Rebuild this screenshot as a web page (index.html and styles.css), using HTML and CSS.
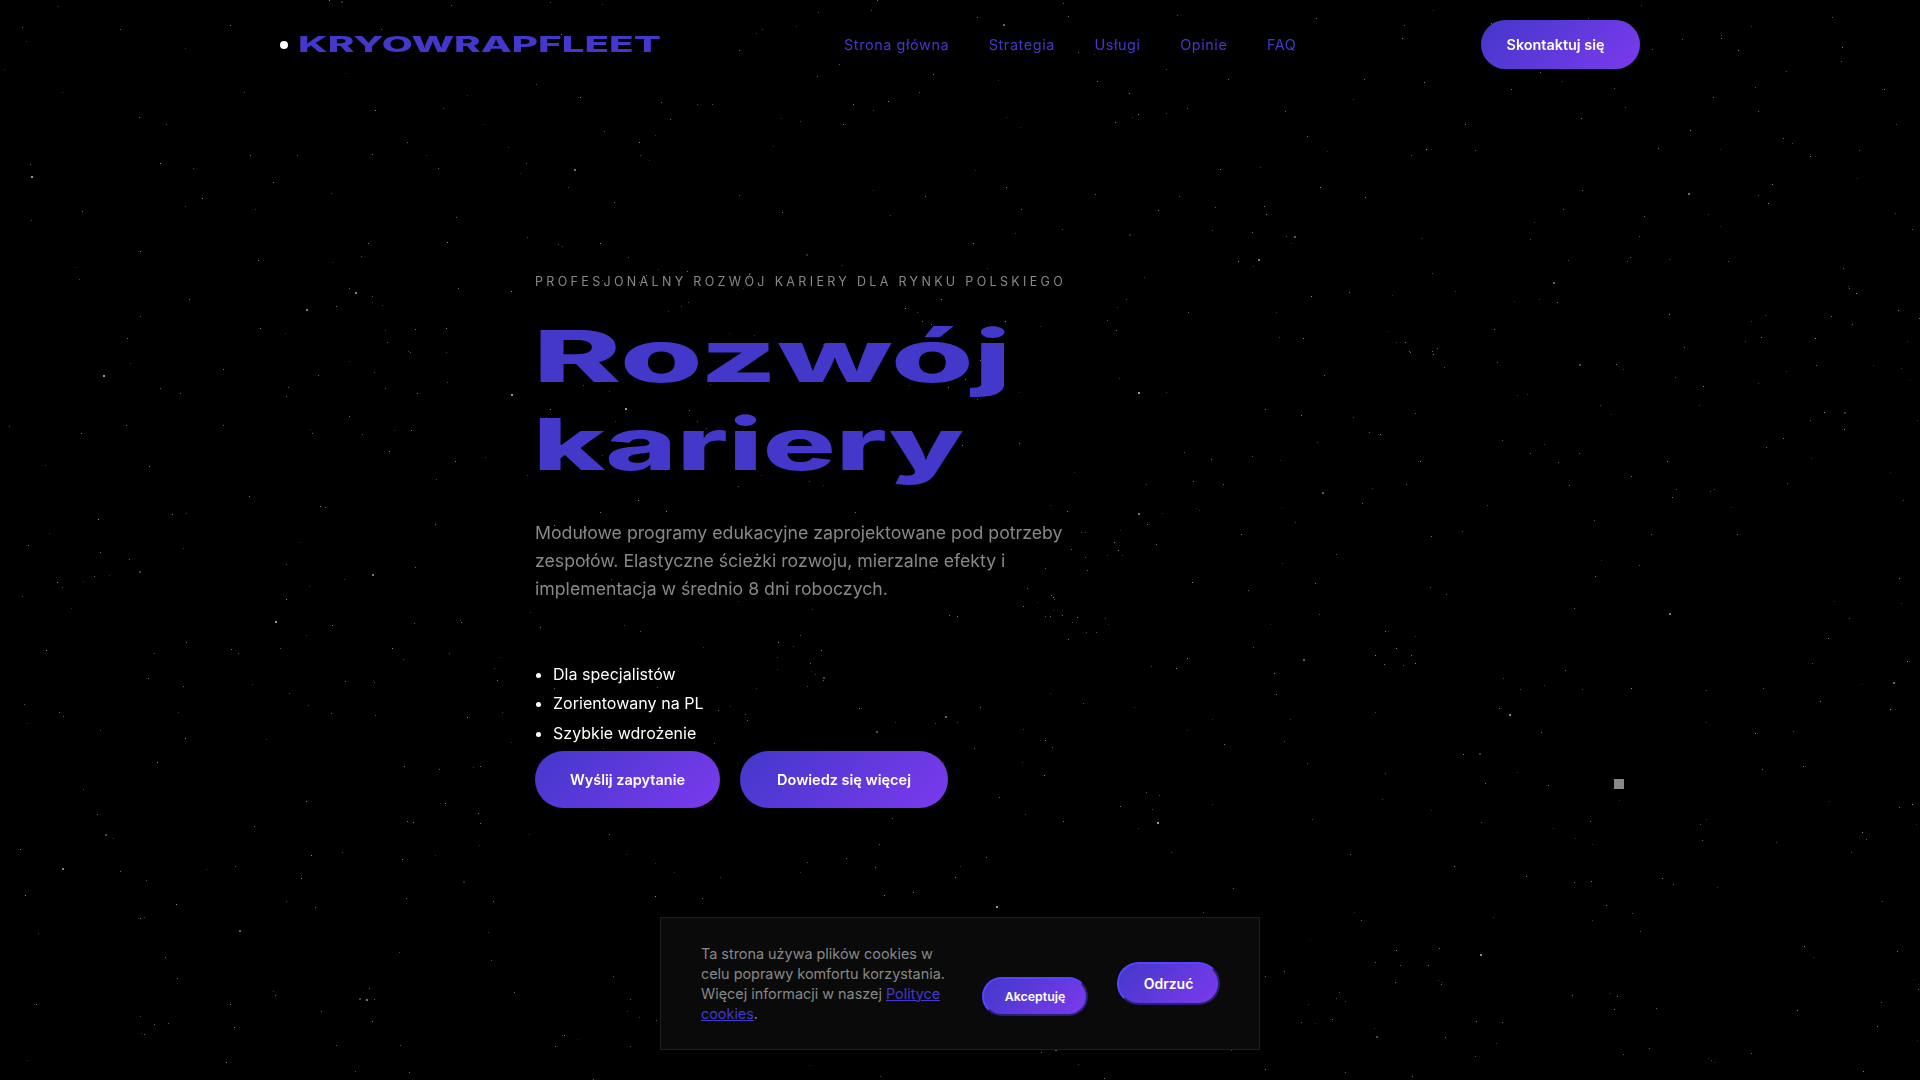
FILE: index.html
```html
<!DOCTYPE html>
<html lang="pl">
<head>
  <meta charset="UTF-8">
  <meta name="viewport" content="width=device-width, initial-scale=1.0">
  <title>KryowrapFleet</title>
  <link rel="stylesheet" href="styles.css">
</head>
<body>
  <canvas id="stars" class="stars" width="1920" height="1080"></canvas>

  <header class="site-header">
    <a class="logo" href="#">
      <span class="logo-dot"></span>
      <span class="logo-text">KRYOWRAPFLEET</span>
    </a>
    <nav class="nav">
      <a href="#">Strona główna</a>
      <a href="#">Strategia</a>
      <a href="#">Usługi</a>
      <a href="#">Opinie</a>
      <a href="#">FAQ</a>
    </nav>
    <a class="btn btn-contact" href="#">Skontaktuj się</a>
  </header>

  <main class="hero">
    <p class="eyebrow">Profesjonalny rozwój kariery dla rynku polskiego</p>
    <h1 class="hero-title"><span class="title-first">Rozwój</span><span class="title-second">kariery</span></h1>
    <p class="hero-lead">Modułowe programy edukacyjne zaprojektowane pod potrzeby zespołów. Elastyczne ścieżki rozwoju, mierzalne efekty i implementacja w średnio 8 dni roboczych.</p>
    <ul class="hero-list">
      <li>Dla specjalistów</li>
      <li>Zorientowany na PL</li>
      <li>Szybkie wdrożenie</li>
    </ul>
    <div class="hero-actions">
      <a class="btn btn-hero btn-send" href="#">Wyślij zapytanie</a>
      <a class="btn btn-hero btn-more" href="#">Dowiedz się więcej</a>
    </div>
  </main>

  <span class="cursor-dot"></span>

  <div class="cookie-box">
    <p class="cookie-text">Ta strona używa plików cookies w celu poprawy komfortu korzystania. Więcej informacji w naszej <a href="#">Polityce cookies</a>.</p>
    <button class="cookie-btn cookie-accept">Akceptuję</button>
    <button class="cookie-btn cookie-reject">Odrzuć</button>
  </div>

  <script src="script.js"></script>
</body>
</html>
```

FILE: styles.css
```css
html, body {
  margin: 0;
  padding: 0;
  height: 100%;
  overflow: hidden;
  background-color: #000;
  font-family: Inter, "Liberation Sans", sans-serif;
  color: #fff;
}

a {
  text-decoration: none;
  color: inherit;
}

.stars {
  position: fixed;
  top: 0;
  left: 0;
  z-index: 0;
}

.site-header,
.hero {
  position: relative;
  z-index: 1;
}

.site-header {
  display: flex;
  align-items: center;
  width: 1360px;
  height: 88px;
  margin: 0 auto;
}

.logo {
  display: flex;
  align-items: center;
  width: 564px;
}

.logo-dot {
  width: 8px;
  height: 8px;
  margin-top: 2px;
  margin-right: 10px;
  border-radius: 50%;
  background-color: #fff;
}

.logo-text {
  display: inline-block;
  font-size: 21px;
  font-weight: 800;
  line-height: 1;
  color: #4338ca;
  transform: scaleX(1.92);
  transform-origin: left center;
}

.nav {
  display: flex;
  gap: 39.5px;
  flex: 1;
  font-size: 14.4px;
  letter-spacing: 0.6px;
  color: #4338ca;
}

.btn {
  display: flex;
  align-items: center;
  justify-content: center;
  box-sizing: border-box;
  border-radius: 999px;
  background: linear-gradient(135deg, #4338ca, #7c3aed);
  color: #fff;
  font-weight: 600;
}

.btn-contact {
  width: 159px;
  height: 49px;
  margin-top: 1px;
  padding-right: 10px;
  font-size: 14.4px;
}

.hero {
  width: 850px;
  margin-left: 535px;
  padding-top: 186px;
}

.eyebrow {
  margin: 0;
  font-size: 12.5px;
  line-height: 16px;
  letter-spacing: 3.33px;
  text-transform: uppercase;
  color: #888;
}

.hero-title {
  margin: 22px 0 0;
  font-size: 72px;
  font-weight: 800;
  line-height: 88px;
  color: #4338ca;
}

.hero-title span {
  display: block;
  width: max-content;
  margin-left: -2px;
  transform-origin: left center;
}

.title-first {
  transform: scaleX(1.855);
}

.title-second {
  transform: scaleX(1.69);
}

.hero-lead {
  width: 560px;
  margin: 31px 0 0;
  font-size: 17.7px;
  line-height: 28px;
  color: #888;
}

.hero-list {
  margin: 57px 0 0;
  padding-left: 18px;
  font-size: 16px;
  letter-spacing: 0.03px;
  line-height: 29.4px;
}

.hero-actions {
  display: flex;
  gap: 20px;
  margin-top: 3px;
}

.btn-hero {
  height: 57px;
  font-size: 14.5px;
}

.btn-send {
  width: 185px;
}

.btn-more {
  width: 208px;
}

.cursor-dot {
  position: fixed;
  left: 1614px;
  top: 779px;
  width: 10px;
  height: 10px;
  background-color: #888;
  z-index: 1;
}

.cookie-box {
  position: fixed;
  left: 660px;
  top: 917px;
  z-index: 2;
  display: flex;
  align-items: center;
  box-sizing: border-box;
  width: 600px;
  height: 133px;
  padding: 0 40px;
  background-color: #0a0a0a;
  border: 1px solid #1f1f1f;
}

.cookie-text {
  width: 250px;
  margin: 0 31px 0 0;
  flex-shrink: 0;
  font-size: 14.4px;
  line-height: 20px;
  color: #888;
}

.cookie-text a {
  color: #4338ca;
  text-decoration: underline;
}

.cookie-btn {
  flex-shrink: 0;
  border: 2px outset #4338ca;
  border-radius: 999px;
  background: linear-gradient(135deg, #4338ca, #7c3aed);
  color: #fff;
  font-family: inherit;
  font-weight: 600;
}

.cookie-accept {
  width: 106px;
  height: 39px;
  margin-top: 25px;
  margin-right: 29px;
  font-size: 12.4px;
}

.cookie-reject {
  width: 103px;
  height: 43px;
  font-size: 14px;
}
```

FILE: script.js
```js
// star field behind the page, seeded so every load looks the same
const canvas = document.getElementById('stars');
const ctx = canvas.getContext('2d');

let seed = 20240611;
function rand() {
  seed = (seed * 1664525 + 1013904223) % 4294967296;
  return seed / 4294967296;
}

function star(x, y, size) {
  const alpha = 0.15 + rand() * 0.4;
  ctx.fillStyle = `rgba(255, 255, 255, ${alpha})`;
  ctx.fillRect(Math.floor(x), Math.floor(y), size, size);
}

for (let i = 0; i < 850; i++) {
  star(rand() * 1920, rand() * 1080, rand() > 0.97 ? 2 : 1);
}

// a few tighter clusters
const clusters = [[1420, 358], [1395, 645], [800, 655], [1085, 620], [1420, 965], [640, 1010], [1040, 600], [1325, 1005], [1100, 540]];
clusters.forEach(([cx, cy]) => {
  for (let i = 0; i < 7; i++) {
    star(cx + (rand() - 0.5) * 50, cy + (rand() - 0.5) * 40, 1);
  }
});

// the brighter ones
const bright = [[275, 621], [103, 375], [1157, 822], [996, 906], [1138, 392], [511, 394], [625, 408], [31, 176]];
bright.forEach(([x, y]) => {
  ctx.fillStyle = 'rgba(255, 255, 255, 0.6)';
  ctx.fillRect(x, y, 2, 2);
});
```
